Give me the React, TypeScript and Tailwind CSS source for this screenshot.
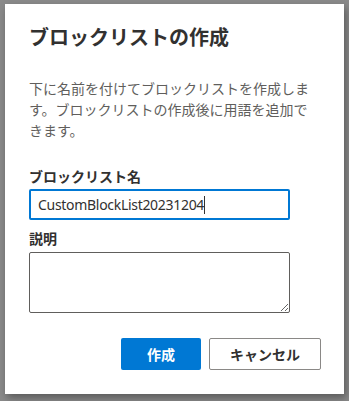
import React from "react";

const jp = "font-['Segoe_UI','Noto_Sans_CJK_JP','Noto_Sans',sans-serif]";

const App = () => {
  return (
    <div className={`w-[349px] h-[401px] bg-[#8a8a8a] pl-[5px] pt-[4px] ${jp}`}>
      <div className="w-[339px] h-[390px] bg-white shadow-[2px_4px_8px_rgba(0,0,0,0.35)] px-6 pt-[19px] flex flex-col">
        <h1 className="text-[20px] leading-[28px] font-bold text-[#323130]">
          ブロックリストの作成
        </h1>

        <p className="mt-[27px] text-[14px] leading-[21px] text-[#605e5c]">
          下に名前を付けてブロックリストを作成します。ブロックリストの作成後に用語を追加できます。
        </p>

        <label className="mt-[25px] text-[14px] leading-[20px] font-semibold text-[#323130]">
          ブロックリスト名
        </label>
        <div className="mt-[3px] w-[261px] h-[31px] border-2 border-[#0078d4] rounded-[2px] flex items-center pl-[7px]">
          <span className="text-[14px] text-[#323130] font-['Noto_Sans',sans-serif] tracking-[-0.3px]">
            CustomBlockList20231204
          </span>
          <span className="w-px h-[18px] bg-[#323130]" />
        </div>

        <label className="mt-[8px] text-[14px] leading-[20px] font-semibold text-[#323130]">
          説明
        </label>
        <textarea
          className="mt-[4px] w-[261px] h-[61px] border border-[#605e5c] rounded-[2px] resize-y outline-none"
          defaultValue=""
        />

        <div className="mt-[25px] flex justify-end gap-2">
          <button className="w-[80px] h-[32px] bg-[#0078d4] rounded-[2px] text-white text-[14px] font-bold">
            作成
          </button>
          <button className="w-[112px] h-[32px] bg-white border border-[#8a8886] rounded-[2px] text-[#323130] text-[14px] font-semibold mr-[-1px]">
            キャンセル
          </button>
        </div>
      </div>
    </div>
  );
};

export default App;
